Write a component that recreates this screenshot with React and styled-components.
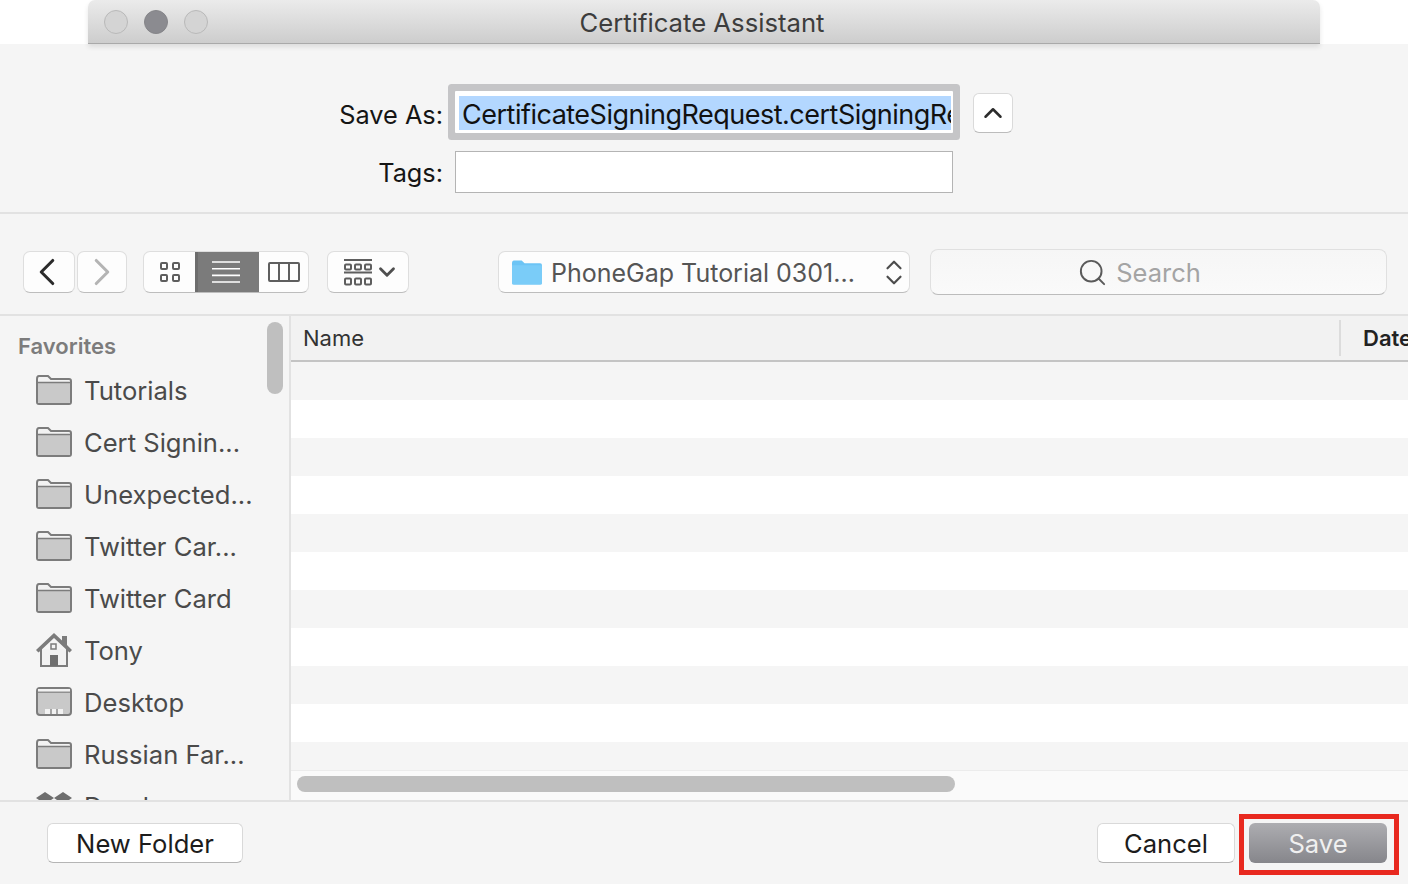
import React from 'react';
import styled, { createGlobalStyle } from 'styled-components';
import { ChevronLeft, ChevronRight, ChevronUp, ChevronDown, Search as SearchIcon } from 'lucide-react';

const GlobalStyle = createGlobalStyle`
    html, body {
        margin: 0;
        padding: 0;
        background: #ffffff;
        overflow: hidden;
    }
    body {
        font-family: Inter, "Liberation Sans", sans-serif;
    }
`;

const favorites = [
    { name: 'Tutorials', icon: 'folder' },
    { name: 'Cert Signin...', icon: 'folder' },
    { name: 'Unexpected...', icon: 'folder' },
    { name: 'Twitter Car...', icon: 'folder' },
    { name: 'Twitter Card', icon: 'folder' },
    { name: 'Tony', icon: 'home' },
    { name: 'Desktop', icon: 'desktop' },
    { name: 'Russian Far...', icon: 'folder' },
    { name: 'Dropbox', icon: 'dropbox' },
];

const Page = styled.div`
    width: 1408px;
    height: 884px;
    overflow: hidden;
    display: flex;
    flex-direction: column;
`;
const TitleWrap = styled.div`
    height: 44px;
    padding: 0 88px;
    position: relative;
    z-index: 2;
`;
const TitleBar = styled.div`
    height: 44px;
    box-sizing: border-box;
    border-radius: 7px 7px 0 0;
    border-bottom: 1px solid #a9a9a9;
    background: linear-gradient(#ebebeb, #cdcdcd);
    box-shadow: 0 3px 5px rgba(0, 0, 0, 0.1);
    display: flex;
    align-items: center;
    padding-left: 16px;
    gap: 16px;
    position: relative;
`;
const Light = styled.span`
    width: 24px;
    height: 24px;
    box-sizing: border-box;
    border-radius: 50%;
    border: 1px solid ${p => (p.$on ? '#858589' : '#b9b9b9')};
    background: ${p => (p.$on ? '#8b8b90' : '#d4d4d4')};
`;
const TitleText = styled.div`
    position: absolute;
    left: 0;
    right: 4px;
    top: 7px;
    text-align: center;
    font-size: 25.7px;
    line-height: 32px;
    color: #3d3d3d;
`;
const Sheet = styled.div`
    flex: 1;
    min-height: 0;
    background: #f5f5f5;
    display: flex;
    flex-direction: column;
`;
const Form = styled.div`
    height: 170px;
    flex: none;
    box-sizing: border-box;
    padding-top: 47px;
    border-bottom: 2px solid #e2e2e2;
    display: flex;
    flex-direction: column;
    gap: 18px;
`;
const FormRow = styled.div`
    display: flex;
    align-items: center;
    height: 42px;
`;
const Label = styled.label`
    width: 443px;
    text-align: right;
    font-size: 25.3px;
    color: #151515;
    margin-right: 12px;
    margin-top: ${p => p.$mt || 0}px;
`;
const NameField = styled.div`
    width: 498px;
    height: 42px;
    box-sizing: border-box;
    background: #ffffff;
    box-shadow: 0 0 0 7px #c5c5c7;
    border-radius: 1px;
    padding: 5px 2px 3px 4px;
    margin-right: 20px;
`;
const Selected = styled.div`
    height: 34px;
    padding-left: 3px;
    background: #b3d7ff;
    overflow: hidden;
    white-space: nowrap;
    font-size: 27px;
    line-height: 38px;
    letter-spacing: -0.5px;
    color: #111111;
`;
const CollapseButton = styled.button`
    width: 40px;
    height: 40px;
    padding: 0;
    margin-top: 2px;
    background: #ffffff;
    border: 1px solid #dadada;
    border-bottom-color: #bcbcbc;
    border-radius: 6px;
    display: flex;
    align-items: center;
    justify-content: center;
    color: #2c2c2c;
`;
const TagsField = styled.div`
    width: 498px;
    height: 42px;
    box-sizing: border-box;
    background: #ffffff;
    border: 1px solid #b4b4b4;
`;
const Toolbar = styled.div`
    height: 102px;
    flex: none;
    box-sizing: border-box;
    border-bottom: 2px solid #e2e2e2;
    padding: 37px 21px 0 23px;
    display: flex;
    align-items: flex-start;
`;
const ToolButton = styled.div`
    height: 42px;
    box-sizing: border-box;
    width: ${p => p.$w}px;
    margin-left: ${p => p.$ml || 0}px;
    padding: 0 ${p => p.$pr || 0}px 0 ${p => p.$pl || 0}px;
    background: #fdfdfd;
    border: 1px solid #dedede;
    border-bottom-color: #bdbdbd;
    border-radius: 7px;
    display: flex;
    align-items: center;
    justify-content: center;
    gap: ${p => p.$gap || 0}px;
    color: ${p => p.$color || '#2b2b2b'};
    svg {
        flex: none;
    }
`;
const ViewGroup = styled.div`
    width: 166px;
    height: 42px;
    margin-left: 16px;
    box-sizing: border-box;
    background: #fdfdfd;
    border: 1px solid #dedede;
    border-bottom-color: #bdbdbd;
    border-radius: 7px;
    display: flex;
    overflow: hidden;
`;
const ViewSegment = styled.div`
    width: ${p => p.$w}px;
    display: flex;
    align-items: center;
    justify-content: center;
    background: ${p => (p.$active ? '#7b7b7b' : 'transparent')};
    border-left: ${p => (p.$active ? '3px solid #6d6d6d' : 'none')};
    padding-right: ${p => (p.$active ? '5px' : '0')};
    box-sizing: border-box;
    margin: ${p => (p.$active ? '-1px 0' : '0')};
`;
const PathPopup = styled(ToolButton)`
    justify-content: flex-start;
    padding-left: 13px;
    font-size: 25px;
    color: #555555;
`;
const PathLabel = styled.span`
    margin: 2px 0 0 9px;
    flex: 1;
    white-space: nowrap;
`;
const Stepper = styled.span`
    display: flex;
    flex-direction: column;
    margin-right: 2px;
    color: #4d4d4d;
`;
const SearchBox = styled.div`
    width: 457px;
    height: 46px;
    margin: -2px 0 0 20px;
    box-sizing: border-box;
    background: linear-gradient(#f6f6f6, #fafafa);
    border: 1px solid #e0e0e0;
    border-bottom-color: #bcbcbc;
    border-radius: 8px;
    display: flex;
    align-items: center;
    justify-content: center;
    gap: 8px;
    font-size: 25.5px;
    color: #a4a4a4;
    padding-right: 39px;
`;
const Body = styled.div`
    flex: 1;
    min-height: 0;
    display: flex;
`;
const Sidebar = styled.div`
    width: 291px;
    flex: none;
    box-sizing: border-box;
    border-right: 2px solid #e2e2e2;
    padding: 15px 0 0 18px;
    position: relative;
    overflow: hidden;
`;
const SideScroll = styled.div`
    position: absolute;
    left: 267px;
    top: 6px;
    width: 16px;
    height: 72px;
    border-radius: 8px;
    background: #bfbfbf;
`;
const SectionTitle = styled.div`
    font-size: 22px;
    line-height: 30px;
    font-weight: 600;
    color: #7c7c7c;
    margin-bottom: 3px;
`;
const SideItem = styled.div`
    height: 52px;
    display: flex;
    align-items: center;
    padding-left: 18px;
    gap: 12px;
    font-size: 25.6px;
    color: #4a4a4a;
    white-space: nowrap;
`;
const FileList = styled.div`
    flex: 1;
    min-width: 0;
    display: flex;
    flex-direction: column;
    position: relative;
    overflow: hidden;
`;
const ListHeader = styled.div`
    height: 46px;
    box-sizing: border-box;
    flex: none;
    border-bottom: 2px solid #c4c4c4;
    background: #f2f2f2;
    display: flex;
    align-items: center;
    font-size: 22px;
    color: #333333;
    overflow: hidden;
`;
const NameColumn = styled.div`
    width: 1050px;
    flex: none;
    height: 36px;
    box-sizing: border-box;
    padding-left: 12px;
    display: flex;
    align-items: center;
    border-right: 2px solid #dcdcdc;
`;
const DateColumn = styled.div`
    flex: none;
    padding-left: 22px;
    font-weight: 600;
    color: #222222;
    white-space: nowrap;
`;
const Row = styled.div`
    height: 38px;
    flex: none;
    background: ${p => (p.$odd ? '#ffffff' : '#f5f5f5')};
`;
const HScroll = styled.div`
    position: absolute;
    left: 0;
    right: 0;
    bottom: 0;
    height: 30px;
    background: #fafafa;
    border-top: 1px solid #ececec;
    box-sizing: border-box;
    padding: 5px 0 0 6px;
`;
const HThumb = styled.div`
    width: 658px;
    height: 16px;
    border-radius: 8px;
    background: #bfbfbf;
`;
const Footer = styled.div`
    height: 84px;
    flex: none;
    box-sizing: border-box;
    border-top: 2px solid #e2e2e2;
    padding: 21px 21px 0 47px;
    display: flex;
    align-items: flex-start;
`;
const PushButton = styled.button`
    width: ${p => p.$w}px;
    height: 40px;
    padding: 0;
    margin: 0;
    box-sizing: border-box;
    background: #ffffff;
    border: 1px solid #d9d9d9;
    border-bottom-color: #b5b5b5;
    border-radius: 6px;
    font-family: inherit;
    font-size: 25.6px;
    color: #1c1c1c;
`;
const Spacer = styled.div`
    flex: 1;
`;
const SaveWrap = styled.div`
    position: relative;
    margin-left: 14px;
`;
const SaveButton = styled(PushButton)`
    display: block;
    border: none;
    background: linear-gradient(#adadb1, #86868b);
    color: #f0f0f0;
`;
const Highlight = styled.div`
    position: absolute;
    left: -10px;
    top: -9px;
    width: 160px;
    height: 61px;
    box-sizing: border-box;
    border: 5px solid #e8291f;
`;

function FolderIcon() {
    return (
        <svg width="36" height="30" viewBox="0 0 36 30">
            <path d="M1 4 Q1 1 3 1 H12 L15 4 H33 Q35 4 35 6 V27 Q35 29 33 29 H3 Q1 29 1 27 Z" fill="#f2f2f2" stroke="#7c7c7c" strokeWidth="2" />
            <path d="M2 8 H34 V27 Q34 28 33 28 H3 Q2 28 2 27 Z" fill="#c9c9c9" />
            <path d="M1 7.5 H35" stroke="#7c7c7c" strokeWidth="1.5" />
        </svg>
    );
}

function HomeIcon() {
    return (
        <svg width="36" height="34" viewBox="0 0 36 34">
            <path d="M5 16 V33 H31 V16" fill="#f2f2f2" stroke="#7c7c7c" strokeWidth="2" />
            <path d="M0 17 L18 0 L26 7.5 V3 H31 V12 L36 17 L33.5 19.5 L18 5 L2.5 19.5 Z" fill="#7c7c7c" />
            <rect x="14" y="22" width="8" height="11" fill="#6f6f6f" />
            <rect x="15" y="11" width="5" height="5" fill="none" stroke="#7c7c7c" strokeWidth="1.5" />
        </svg>
    );
}

function DesktopIcon() {
    return (
        <svg width="36" height="30" viewBox="0 0 36 30">
            <rect x="1" y="1" width="34" height="27" rx="3" fill="#c9c9c9" stroke="#7c7c7c" strokeWidth="2" />
            <path d="M2 5 H34" stroke="#7c7c7c" strokeWidth="1.5" />
            <rect x="2" y="2" width="32" height="2.5" fill="#f2f2f2" />
            <rect x="9" y="22" width="18" height="5" fill="#f2f2f2" />
            <path d="M15 22 V27 M21 22 V27" stroke="#8c8c8c" strokeWidth="1.5" />
        </svg>
    );
}

function DropboxIcon() {
    return (
        <svg width="36" height="30" viewBox="0 0 36 30">
            <path d="M9 1 L18 7 L9 13 L0 7 Z M27 1 L36 7 L27 13 L18 7 Z M9 13 L18 19 L9 25 L0 19 Z M27 13 L36 19 L27 25 L18 19 Z" fill="#6e6e6e" />
        </svg>
    );
}

const sideIcons = { folder: FolderIcon, home: HomeIcon, desktop: DesktopIcon, dropbox: DropboxIcon };

function IconGridIcon() {
    return (
        <svg width="22" height="22" viewBox="0 0 22 22" fill="none" stroke="#5e5e5e" strokeWidth="2">
            <rect x="2" y="2" width="6" height="6" rx="1" />
            <rect x="14" y="2" width="6" height="6" rx="1" />
            <rect x="2" y="14" width="6" height="6" rx="1" />
            <rect x="14" y="14" width="6" height="6" rx="1" />
        </svg>
    );
}

function ListViewIcon() {
    return (
        <svg width="30" height="22" viewBox="0 0 30 22" stroke="#ffffff" strokeWidth="1.6">
            <path d="M1 1 H29 M1 7.7 H29 M1 14.4 H29 M1 21 H29" />
        </svg>
    );
}

function ColumnsIcon() {
    return (
        <svg width="32" height="20" viewBox="0 0 32 20" fill="none" stroke="#5e5e5e" strokeWidth="2">
            <rect x="1" y="1" width="30" height="18" rx="1" />
            <path d="M11 1 V19 M21 1 V19" />
        </svg>
    );
}

function GalleryIcon() {
    return (
        <svg width="28" height="27" viewBox="0 0 28 27" fill="none" stroke="#5e5e5e" strokeWidth="2">
            <path d="M0 1 H28 M0 13.5 H28" />
            <rect x="1" y="5.5" width="6" height="5" rx="1" />
            <rect x="11" y="5.5" width="6" height="5" rx="1" />
            <rect x="21" y="5.5" width="6" height="5" rx="1" />
            <rect x="1" y="19.5" width="6" height="6" rx="1" />
            <rect x="11" y="19.5" width="6" height="6" rx="1" />
            <rect x="21" y="19.5" width="6" height="6" rx="1" />
        </svg>
    );
}

function BlueFolderIcon() {
    return (
        <svg width="30" height="25" viewBox="0 0 31 25">
            <path d="M0 3 Q0 0 2 0 H10 L13 3 H29 Q31 3 31 5 V23 Q31 25 29 25 H2 Q0 25 0 23 Z" fill="#6cc4f5" />
            <path d="M0 5 H31 V23 Q31 25 29 25 H2 Q0 25 0 23 Z" fill="#7accf8" />
        </svg>
    );
}

function App() {
    const rows = Array.from({ length: 11 }, (_, k) => k);

    return (
        <Page>
            <GlobalStyle />
            <TitleWrap>
                <TitleBar>
                    <Light />
                    <Light $on />
                    <Light />
                    <TitleText>Certificate Assistant</TitleText>
                </TitleBar>
            </TitleWrap>
            <Sheet>
                <Form>
                    <FormRow>
                        <Label $mt={4}>Save As:</Label>
                        <NameField>
                            <Selected>CertificateSigningRequest.certSigningRequest</Selected>
                        </NameField>
                        <CollapseButton>
                            <ChevronUp size={30} strokeWidth={2} />
                        </CollapseButton>
                    </FormRow>
                    <FormRow>
                        <Label>Tags:</Label>
                        <TagsField />
                    </FormRow>
                </Form>
                <Toolbar>
                    <ToolButton $w={52} $pr={4}>
                        <ChevronLeft size={46} strokeWidth={1.6} />
                    </ToolButton>
                    <ToolButton $w={50} $ml={2} $color="#b4b4b4">
                        <ChevronRight size={46} strokeWidth={1.6} />
                    </ToolButton>
                    <ViewGroup>
                        <ViewSegment $w={51}><IconGridIcon /></ViewSegment>
                        <ViewSegment $w={64} $active><ListViewIcon /></ViewSegment>
                        <ViewSegment $w={49}><ColumnsIcon /></ViewSegment>
                    </ViewGroup>
                    <ToolButton $w={82} $ml={18} $gap={2} $pl={8} $color="#4f4f4f">
                        <GalleryIcon />
                        <ChevronDown size={26} strokeWidth={2.6} />
                    </ToolButton>
                    <PathPopup $w={412} $ml={89}>
                        <BlueFolderIcon />
                        <PathLabel>PhoneGap Tutorial 0301...</PathLabel>
                        <Stepper>
                            <ChevronUp size={26} strokeWidth={2} style={{ marginBottom: -11 }} />
                            <ChevronDown size={26} strokeWidth={2} />
                        </Stepper>
                    </PathPopup>
                    <SearchBox>
                        <SearchIcon size={31} strokeWidth={1.5} color="#5a5a5a" />
                        <span>Search</span>
                    </SearchBox>
                </Toolbar>
                <Body>
                    <Sidebar>
                        <SideScroll />
                        <SectionTitle>Favorites</SectionTitle>
                        {
                            favorites.map((item, k) => {
                                const Icon = sideIcons[item.icon];
                                return (
                                    <SideItem key={k}>
                                        <Icon />
                                        <span>{item.name}</span>
                                    </SideItem>
                                )
                            })
                        }
                    </Sidebar>
                    <FileList>
                        <ListHeader>
                            <NameColumn>Name</NameColumn>
                            <DateColumn>Date Modified</DateColumn>
                        </ListHeader>
                        {
                            rows.map(k => <Row key={k} $odd={k % 2 === 1} />)
                        }
                        <HScroll>
                            <HThumb />
                        </HScroll>
                    </FileList>
                </Body>
                <Footer>
                    <PushButton $w={196}>New Folder</PushButton>
                    <Spacer />
                    <PushButton $w={138}>Cancel</PushButton>
                    <SaveWrap>
                        <SaveButton $w={138}>Save</SaveButton>
                        <Highlight />
                    </SaveWrap>
                </Footer>
            </Sheet>
        </Page>
    );
}

export default App;
